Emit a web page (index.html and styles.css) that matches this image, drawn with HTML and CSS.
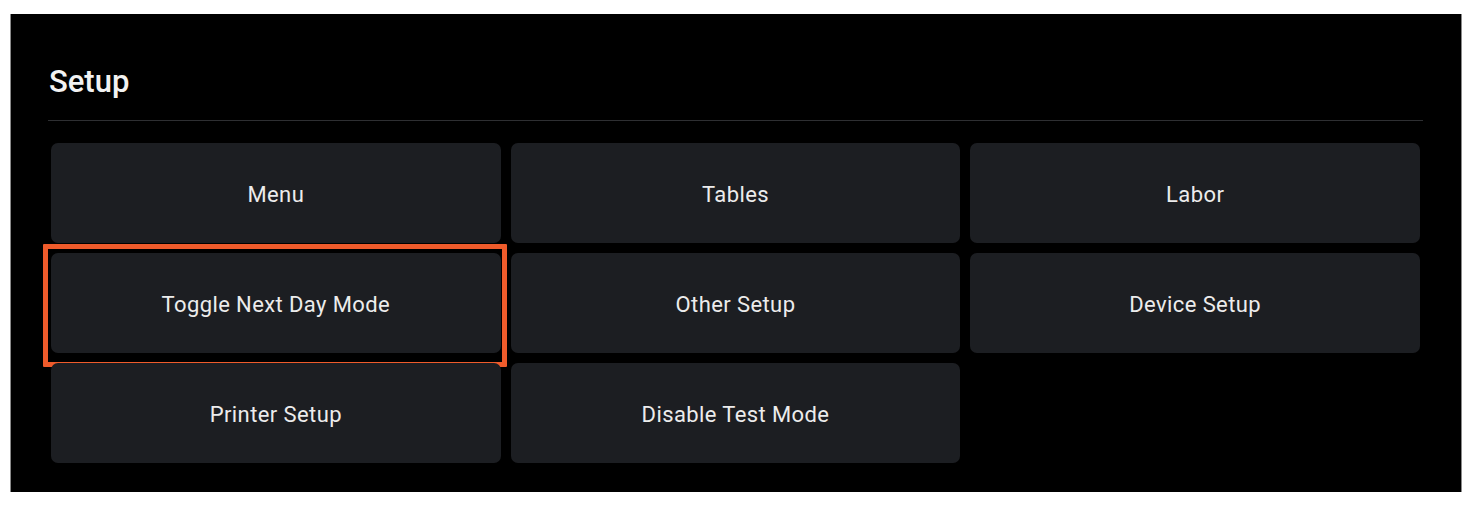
FILE: index.html
```html
<!DOCTYPE html>
<html>
<head>
<meta charset="utf-8">
<link rel="stylesheet" href="styles.css">
</head>
<body>
<div class="panel">
  <h1 class="title">Setup</h1>
  <div class="divider"></div>
  <div class="grid">
    <div class="btn">Menu</div>
    <div class="btn">Tables</div>
    <div class="btn">Labor</div>
    <div class="btn highlighted">Toggle Next Day Mode</div>
    <div class="btn">Other Setup</div>
    <div class="btn">Device Setup</div>
    <div class="btn">Printer Setup</div>
    <div class="btn">Disable Test Mode</div>
  </div>
</div>
</body>
</html>
```
FILE: styles.css
```css
html, body {
  margin: 0;
  padding: 0;
  background: #ffffff;
}
body {
  padding: 14px 8px 16px 10px;
  font-family: Roboto, "Liberation Sans", sans-serif;
}
.panel {
  background: #000000;
  border-left: 1px solid #8a8a8a;
  border-right: 1px solid #8a8a8a;
  box-sizing: border-box;
  width: 1452px;
  height: 478px;
  padding: 0 38px 0 37px;
}
.title {
  margin: 0;
  padding: 50px 0 0 1px;
  height: 56px;
  font-size: 31px;
  font-weight: 500;
  color: #f2f2f2;
  line-height: 36px;
}
.divider {
  height: 1px;
  background: #2e2f32;
}
.grid {
  margin: 22px 3px 0 3px;
  display: grid;
  grid-template-columns: repeat(3, 1fr);
  grid-auto-rows: 100px;
  gap: 10px;
}
.btn {
  position: relative;
  background: #1c1e22;
  border-radius: 7px;
  display: flex;
  align-items: center;
  justify-content: center;
  padding-top: 3px;
  box-sizing: border-box;
  color: #ececec;
  font-size: 22px;
  letter-spacing: 0.4px;
}
.highlighted::after {
  content: "";
  position: absolute;
  left: -8px;
  top: -9px;
  right: -6px;
  bottom: -14px;
  border: 5px solid #ef5b2b;
  border-radius: 1px;
  box-sizing: border-box;
}
```
